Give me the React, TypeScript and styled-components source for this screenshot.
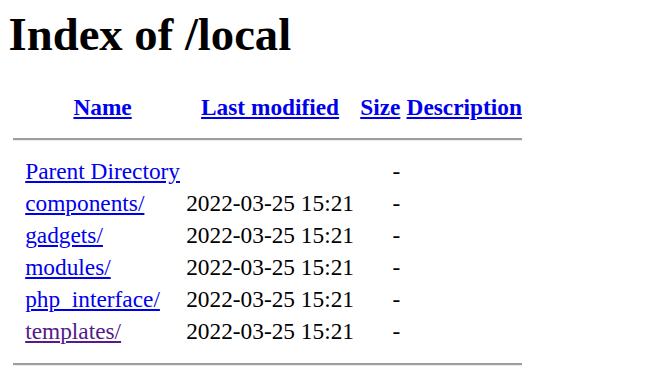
import React from "react";
import styled, { createGlobalStyle } from "styled-components";

const Global = createGlobalStyle`
  html, body { margin: 0; padding: 0; background: #ffffff; }
  body {
    font-family: "Liberation Serif", "Times New Roman", serif;
    font-size: 23.33px;
    color: #000000;
  }
`;

const Page = styled.div`
  padding: 0 8.6px;
`;

const Title = styled.h1`
  font-size: 46.67px;
  font-weight: bold;
  line-height: normal;
  margin: 7.4px 0 29.3px;
`;

const Listing = styled.table`
  border-collapse: separate;
  border-spacing: 2.9px;
  font-size: 23.33px;
`;

const HeadCell = styled.th`
  padding: 1.46px 2.1px;
  text-align: center;
  font-weight: bold;
`;

const Cell = styled.td<{ $align?: "left" | "right" }>`
  padding: 1.46px 2.1px;
  text-align: ${(p) => p.$align ?? "left"};
  white-space: nowrap;
`;

const IconCell = styled.td`
  padding: 1.46px 2.1px;
  width: 6.3px;
`;

const IconHead = styled.th`
  padding: 1.46px 2.1px;
  width: 6.3px;
`;

const RuleCell = styled.th`
  padding: 1.46px 2.1px;
`;

const Rule = styled.hr<{ $top: number; $bottom: number }>`
  height: 0;
  margin: ${(p) => p.$top}px 0 ${(p) => p.$bottom}px;
  border: none;
  border-top: 2px solid #9e9e9e;
  border-bottom: 1px solid #ececec;
`;

const Link = styled.a<{ $visited?: boolean }>`
  color: ${(p) => (p.$visited ? "#551a8b" : "#0000ee")};
  text-decoration: underline;
`;

type Entry = { name: string; date: string; visited?: boolean };

const entries: Entry[] = [
  { name: "Parent Directory", date: "" },
  { name: "components/", date: "2022-03-25 15:21" },
  { name: "gadgets/", date: "2022-03-25 15:21" },
  { name: "modules/", date: "2022-03-25 15:21" },
  { name: "php_interface/", date: "2022-03-25 15:21" },
  { name: "templates/", date: "2022-03-25 15:21", visited: true },
];

export default function App() {
  return (
    <Page>
      <Global />
      <Title>Index of /local</Title>
      <Listing>
        <tbody>
          <tr>
            <IconHead />
            <HeadCell>
              <Link href="#">Name</Link>
            </HeadCell>
            <HeadCell>
              <Link href="#">Last modified</Link>
            </HeadCell>
            <HeadCell>
              <Link href="#">Size</Link>
            </HeadCell>
            <HeadCell>
              <Link href="#">Description</Link>
            </HeadCell>
          </tr>
          <tr>
            <RuleCell colSpan={5}>
              <Rule $top={11.67} $bottom={12.67} />
            </RuleCell>
          </tr>
          {entries.map((e) => (
            <tr key={e.name}>
              <IconCell />
              <Cell>
                <Link href="#" $visited={e.visited}>
                  {e.name}
                </Link>
              </Cell>
              <Cell $align="right">{e.date}</Cell>
              <Cell $align="right">-</Cell>
              <Cell>&nbsp;</Cell>
            </tr>
          ))}
          <tr>
            <RuleCell colSpan={5}>
              <Rule $top={13.67} $bottom={11.67} />
            </RuleCell>
          </tr>
        </tbody>
      </Listing>
    </Page>
  );
}
